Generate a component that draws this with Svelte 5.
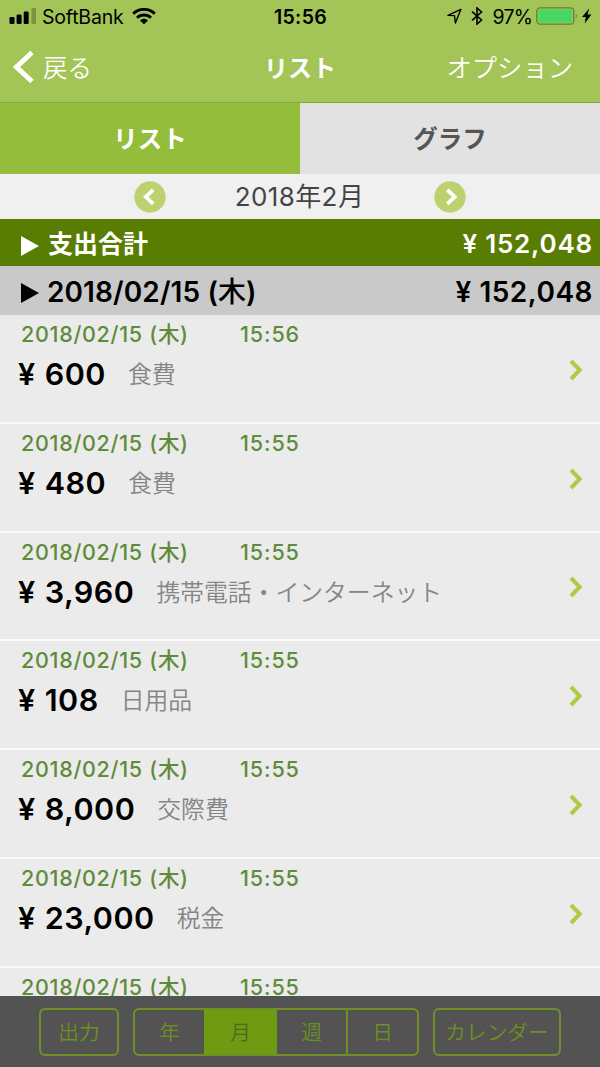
<script lang="ts">
	type Entry = { time: string; amount: string; category: string };

	const day = '2018/02/15 (木)';
	const total = '152,048';
	const entries: Entry[] = [
		{ time: '15:56', amount: '600', category: '食費' },
		{ time: '15:55', amount: '480', category: '食費' },
		{ time: '15:55', amount: '3,960', category: '携帯電話・インターネット' },
		{ time: '15:55', amount: '108', category: '日用品' },
		{ time: '15:55', amount: '8,000', category: '交際費' },
		{ time: '15:55', amount: '23,000', category: '税金' },
		{ time: '15:55', amount: '', category: '' },
	];
	const periods = ['年', '月', '週', '日'];

	let tab = $state('list');
	let period = $state('月');
</script>

<div class="app">
	<header>
		<div class="status">
			<div class="side">
				<svg class="signal" width="28" height="16" viewBox="0 0 28 16">
					<rect x="0.5" y="9" width="5" height="7" rx="1.3" />
					<rect x="7.6" y="6.5" width="5" height="9.5" rx="1.3" />
					<rect x="14.7" y="3.5" width="5" height="12.5" rx="1.3" />
					<rect x="22.5" y="0" width="4.5" height="16" rx="1" opacity="0.25" />
				</svg>
				<span class="carrier">SoftBank</span>
				<svg width="24" height="16" viewBox="0 0 24 16">
					<g fill="none" stroke="#000" stroke-width="2.9">
						<path d="M1.2 5.7C7.2-.1 16.8-.1 22.8 5.7" />
						<path d="M5 9.8C9 6 15 6 19 9.8" />
					</g>
					<path d="M8 12.4C10.3 10.3 13.7 10.3 16 12.4L12 16.4Z" />
				</svg>
			</div>
			<span class="clock">15:56</span>
			<div class="side right">
				<svg width="15" height="17" viewBox="0 0 15 17">
					<path d="M1 7.4L13.8 1.4L8.4 15L7.5 7.6Z" fill="none" stroke="#000" stroke-width="1.4" stroke-linejoin="round" />
				</svg>
				<svg class="bt" width="12" height="18" viewBox="0 0 12 18">
					<path d="M1 4.7L10.5 13L6 17V1L10.5 5L1 13.3" fill="none" stroke="#000" stroke-width="1.6" />
				</svg>
				<span class="percent">97%</span>
				<svg class="battery" width="56" height="18" viewBox="0 0 56 18">
					<rect x="0.8" y="0.8" width="37" height="16.4" rx="3.5" fill="none" stroke="#667e36" stroke-width="1.3" />
					<rect x="2.6" y="2.6" width="33.4" height="12.8" rx="1.5" fill="#47d864" />
					<path d="M39.8 6.2Q42 9 39.8 11.8Z" fill="#667e36" />
					<path d="M53.2 1.5L46 10H49.8L48.7 16.5L55.4 7.4H51.6Z" />
				</svg>
			</div>
		</div>
		<nav>
			<button class="back">
				<svg width="22" height="34" viewBox="0 0 22 34">
					<path d="M19 2.5L3.5 17L19 31.5" fill="none" stroke="#fff" stroke-width="5" />
				</svg>
				<span>戻る</span>
			</button>
			<h1>リスト</h1>
			<button class="options">オプション</button>
		</nav>
	</header>

	<div class="tabs">
		<button class:active={tab === 'list'} onclick={() => (tab = 'list')}>リスト</button>
		<button class:active={tab === 'graph'} onclick={() => (tab = 'graph')}>グラフ</button>
	</div>

	<div class="month">
		<svg width="32" height="32" viewBox="0 0 32 32">
			<circle cx="16" cy="16" r="15.7" fill="#bdd16f" />
			<path d="M19.2 8.8L11.8 15.8L19.2 22.8" fill="none" stroke="#fff" stroke-width="3.8" />
		</svg>
		<span>2018年2月</span>
		<svg width="32" height="32" viewBox="0 0 32 32">
			<circle cx="16" cy="16" r="15.7" fill="#bdd16f" />
			<path d="M13.3 8.8L20.7 15.8L13.3 22.8" fill="none" stroke="#fff" stroke-width="3.8" />
		</svg>
	</div>

	<div class="summary total">
		<svg width="18" height="20" viewBox="0 0 18 20"><path d="M0 0L18 10L0 20Z" fill="currentColor" /></svg>
		<span class="label">支出合計</span>
		<span class="sum">¥ {total}</span>
	</div>
	<div class="summary day">
		<svg width="18" height="20" viewBox="0 0 18 20"><path d="M0 0L18 10L0 20Z" fill="currentColor" /></svg>
		<span class="label">{day}</span>
		<span class="sum">¥ {total}</span>
	</div>

	<ul>
		{#each entries as entry}
			<li>
				<div class="info">
					<div class="when">
						<span class="date">{day}</span>
						<span class="time">{entry.time}</span>
					</div>
					{#if entry.amount}
						<div class="what">
							<span class="yen">¥</span>
							<span class="amount">{entry.amount}</span>
							<span class="category">{entry.category}</span>
						</div>
					{/if}
				</div>
				<svg width="14" height="22" viewBox="0 0 14 22">
					<path d="M2 2L10.7 11L2 20" fill="none" stroke="#accb47" stroke-width="4" />
				</svg>
			</li>
		{/each}
	</ul>

	<footer>
		<button class="output">出力</button>
		<div class="periods">
			{#each periods as p}
				<button class:active={period === p} onclick={() => (period = p)}>{p}</button>
			{/each}
		</div>
		<button class="calendar">カレンダー</button>
	</footer>
</div>

<style>
	:global(body) {
		margin: 0;
		background: #ebebeb;
	}
	.app {
		display: flex;
		flex-direction: column;
		width: 600px;
		height: 1067px;
		overflow: hidden;
		font-family: Inter, 'Noto Sans CJK JP', sans-serif;
		color: #000;
	}
	button {
		padding: 0;
		border: 0;
		background: none;
		font: inherit;
		color: inherit;
		white-space: nowrap;
	}
	svg {
		display: block;
		flex: none;
	}
	header {
		flex: none;
		height: 103px;
		box-sizing: border-box;
		background: #a3c456;
		border-bottom: 1px solid #86a53b;
	}
	.status {
		display: flex;
		align-items: center;
		height: 32px;
		padding: 0 8px 0 9px;
	}
	.side {
		display: flex;
		flex: 1;
		align-items: center;
	}
	.right {
		justify-content: flex-end;
	}
	.carrier,
	.clock,
	.percent {
		padding-top: 1px;
		font-size: 19.5px;
	}
	.carrier {
		margin: 0 9px 0 5px;
		letter-spacing: -0.2px;
	}
	.clock {
		font-weight: 600;
		letter-spacing: 0.3px;
	}
	.bt {
		margin-left: 9px;
	}
	.percent {
		margin: 0 4px 0 10px;
		letter-spacing: -0.8px;
	}
	nav {
		display: grid;
		grid-template-columns: 1fr auto 1fr;
		align-items: center;
		height: 70px;
		padding: 0 27px 0 13px;
		color: #fff;
		font-size: 24.5px;
	}
	nav span,
	h1,
	.options {
		padding-bottom: 2px;
	}
	.back {
		display: flex;
		align-items: center;
		gap: 8px;
		font-weight: 350;
	}
	h1 {
		margin: 0 0 0 14px;
		font-size: 24px;
		font-weight: 700;
	}
	.options {
		justify-self: end;
		font-size: 25.3px;
		font-weight: 350;
	}
	.tabs {
		display: flex;
		flex: none;
		height: 71px;
	}
	.tabs button {
		flex: 1;
		padding-bottom: 3px;
		background: #e2e2e2;
		color: #555;
		font-size: 24.5px;
		font-weight: 700;
	}
	.tabs .active {
		background: #94bd3b;
		color: #fff;
	}
	.month {
		display: flex;
		flex: none;
		align-items: center;
		justify-content: space-between;
		height: 45px;
		padding: 0 134px;
		background: #f0f0f0;
		color: #444;
		font-size: 26px;
		letter-spacing: 0.4px;
	}
	.month span {
		padding: 0 1px 4px 0;
	}
	.summary {
		display: flex;
		flex: none;
		align-items: center;
		box-sizing: border-box;
		padding: 0 7px 0 21px;
	}
	.summary svg {
		margin-top: 5px;
	}
	.total svg {
		margin-top: 7px;
	}
	.summary .label {
		flex: 1;
		margin-left: 9px;
		padding-bottom: 2px;
	}
	.sum {
		padding-top: 1px;
		font-weight: 600;
	}
	.total {
		height: 47px;
		background: #587d02;
		color: #fff;
		font-size: 25px;
		font-weight: 700;
	}
	.total .sum {
		font-size: 26px;
		letter-spacing: 0.8px;
	}
	.day {
		height: 49px;
		background: #c9c9c9;
		font-family: Inter, 'Noto Sans CJK JP Medium', 'Noto Sans CJK JP', sans-serif;
		font-size: 28px;
		font-weight: 600;
	}
	.day .label {
		margin-left: 8px;
		letter-spacing: 0.1px;
	}
	.day .sum {
		padding-top: 3px;
		letter-spacing: 0.5px;
	}
	ul {
		flex: 1;
		min-height: 0;
		margin: 0;
		padding: 0;
		overflow: hidden;
		list-style: none;
	}
	li {
		display: flex;
		align-items: center;
		justify-content: space-between;
		box-sizing: border-box;
		height: 108.8px;
		padding: 3px 17px 0 18px;
		border-bottom: 2px solid #fafafa;
		background: #ebebeb;
	}
	.info {
		align-self: flex-start;
	}
	.when {
		display: flex;
		height: 32px;
		line-height: 32px;
		padding-left: 3px;
		color: #5f8c3a;
		font-size: 21.5px;
		font-weight: 500;
		letter-spacing: 0.7px;
	}
	.date {
		width: 219px;
	}
	.time {
		font-weight: 550;
		letter-spacing: 0.9px;
	}
	.what {
		display: flex;
		height: 48px;
		line-height: 48px;
		font-weight: 600;
		font-size: 30.5px;
	}
	.amount {
		margin: 0 22px 0 9.5px;
		letter-spacing: 0.5px;
	}
	.category {
		padding-top: 1px;
		color: #858585;
		font-size: 23.8px;
		font-weight: 350;
	}
	footer {
		display: flex;
		flex: none;
		align-items: center;
		gap: 14px;
		height: 71px;
		padding-left: 39px;
		background: #535353;
		color: #6f8f20;
		font-size: 20.7px;
		font-weight: 350;
	}
	footer > * {
		box-sizing: border-box;
		height: 48px;
		border: 2px solid #718f27;
		border-radius: 6px;
	}
	footer button {
		padding-bottom: 2px;
	}
	.output {
		border: 2px solid #718f27;
		width: 80px;
	}
	.periods {
		display: flex;
		width: 286px;
		overflow: hidden;
	}
	.periods button {
		flex: 1;
	}
	.periods button + button {
		border-left: 2px solid #718f27;
	}
	.periods .active,
	.periods .active + button {
		border-left-color: #6f9a12;
	}
	.periods .active {
		background: #6f9a12;
		color: #4d6920;
	}
	.calendar {
		border: 2px solid #718f27;
		width: 128px;
	}
</style>
